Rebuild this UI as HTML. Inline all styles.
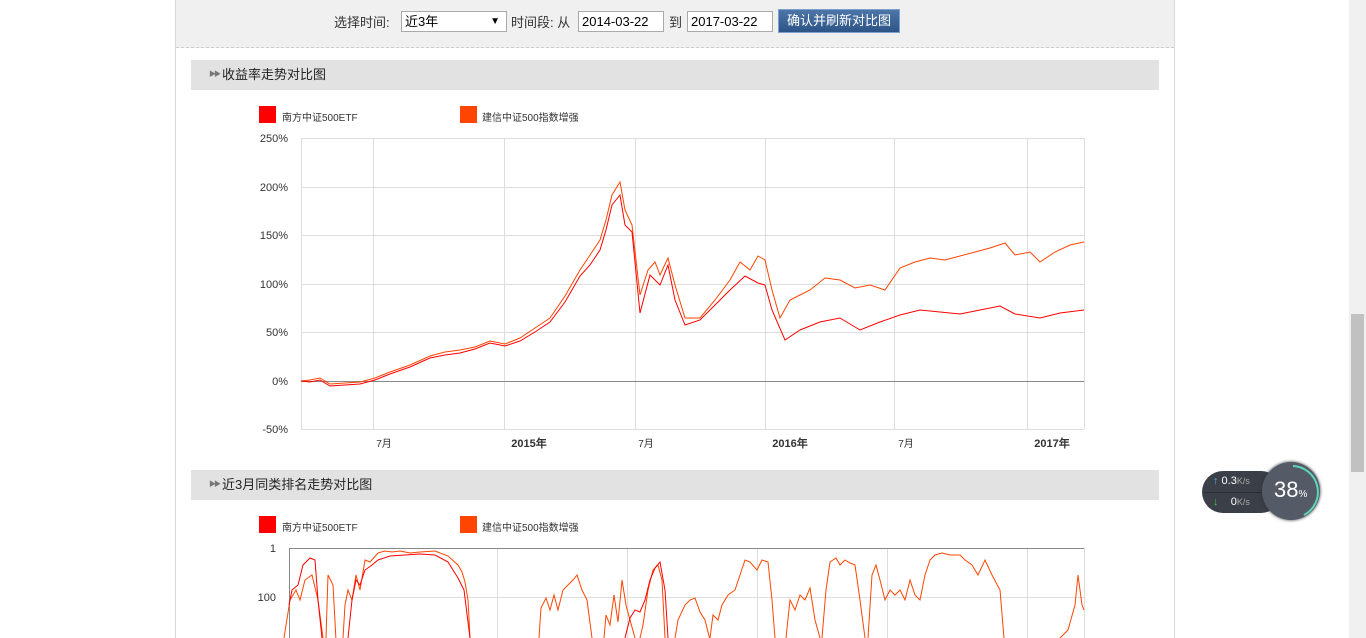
<!DOCTYPE html>
<html><head><meta charset="utf-8"><style>
body{margin:0;width:1366px;height:638px;overflow:hidden;background:#fff;font-family:"Liberation Sans","Noto Sans CJK SC",sans-serif;position:relative}
.wrap{position:absolute;left:175px;top:0;width:998px;height:638px;border-left:1px solid #d8d8d8;border-right:1px solid #d8d8d8}
.top{position:absolute;left:0;top:0;width:998px;height:47px;background:#f0f0f0;border-bottom:1px dashed #ccc}
.t{position:absolute;font-size:13px;color:#333}
.inp{position:absolute;top:11px;border:1px solid #aaa;background:#fff;font-size:13px;line-height:19px;padding-left:3px;box-sizing:border-box;height:21px}
.btn{position:absolute;left:602px;top:9px;width:122px;height:24px;background:linear-gradient(#4d76a8,#2d5486);border:1px solid #7aa0d0;box-sizing:border-box;color:#fff;font-size:13px;line-height:22px;text-align:center}
.bar{position:absolute;left:15px;width:968px;height:30px;background:#e2e2e2;font-size:13px;color:#222;line-height:30px}
.bar span{position:absolute;left:18px;top:0;font-size:7px;color:#777;letter-spacing:-2px}
.bar b{font-weight:normal;position:absolute;left:31px}
.lg{position:absolute;width:17px;height:17px}
.lt{position:absolute;font-size:10px;color:#333}
.sb{position:absolute;left:1349px;top:0;width:17px;height:638px;background:#f0f0f0}
</style></head><body>
<div class="wrap">
<div class="top">
<div class="t" style="left:158px;top:12px">选择时间:</div>
<div class="inp" style="left:225px;width:106px">近3年<span style="position:absolute;right:6px;font-size:10px">▼</span></div>
<div class="t" style="left:335px;top:12px">时间段: 从</div>
<div class="inp" style="left:402px;width:86px">2014-03-22</div>
<div class="t" style="left:493px;top:12px">到</div>
<div class="inp" style="left:511px;width:86px">2017-03-22</div>
<div class="btn">确认并刷新对比图</div>
</div>
<div class="bar" style="top:60px"><span>▶▶</span><b>收益率走势对比图</b></div>
<div class="bar" style="top:470px"><span>▶▶</span><b>近3月同类排名走势对比图</b></div>
</div>
<div class="lg" style="left:259px;top:106px;background:#f00"></div><div class="lt" style="left:282px;top:109px">南方中证500ETF</div>
<div class="lg" style="left:460px;top:106px;background:#ff4500"></div><div class="lt" style="left:482px;top:109px">建信中证500指数增强</div>
<div class="lg" style="left:259px;top:516px;background:#f00"></div><div class="lt" style="left:282px;top:519px">南方中证500ETF</div>
<div class="lg" style="left:460px;top:516px;background:#ff4500"></div><div class="lt" style="left:482px;top:519px">建信中证500指数增强</div>
<svg width="1366" height="638" style="position:absolute;left:0;top:0" font-family="Liberation Sans" font-size="11">
<g stroke="#ddd" stroke-width="1" fill="none">
<path d="M301 138.5H1084M301 187.5H1084M301 235.5H1084M301 284.5H1084M301 332.5H1084M301 429.5H1084"/>
<path d="M373.5 138V429M504.5 138V429M635.5 138V429M765.5 138V429M894.5 138V429M1027.5 138V429M1084.5 138V429M301.5 138V429"/>
<path d="M289 597.5H1084M497.5 548V638M627.5 548V638M757.5 548V638M887.5 548V638M1027.5 548V638M1084.5 548V638"/>
</g>
<path d="M301 381.5H1084" stroke="#888"/>
<path d="M289 548.5H1084M289.5 548V638" stroke="#888"/>
<g fill="#333" text-anchor="end"><text x="288" y="142">250%</text><text x="288" y="191">200%</text><text x="288" y="239">150%</text><text x="288" y="288">100%</text><text x="288" y="336">50%</text><text x="288" y="385">0%</text><text x="288" y="433">-50%</text>
<text x="276" y="552">1</text><text x="276" y="601">100</text></g>
<g fill="#333" text-anchor="middle" font-size="10"><text x="384" y="447">7月</text><text x="646" y="447">7月</text><text x="906" y="447">7月</text>
<g font-weight="bold" font-size="11"><text x="529" y="447">2015年</text><text x="790" y="447">2016年</text><text x="1052" y="447">2017年</text></g></g>
<polyline fill="none" stroke="#ff4500" points="301,381 310,380 320,378 330,384 345,383 360,382 375,378 390,372 410,365 430,356 445,352 460,350 475,347 490,341 505,344 520,338 535,328 550,318 565,296 580,270 590,255 600,240 606,220 612,195 620,182 625,210 632,225 640,295 648,270 655,262 660,275 668,258 675,285 685,318 700,318 715,300 730,280 740,262 750,270 758,256 765,260 772,290 780,318 790,300 800,295 810,290 825,278 840,280 855,288 870,285 885,290 900,268 915,262 930,258 945,260 960,256 975,252 990,248 1005,243 1015,255 1030,252 1040,262 1055,252 1070,245 1084,242"/>
<polyline fill="none" stroke="#f00" points="301,381 310,382 320,380 330,386 345,385 360,384 375,380 390,374 410,367 430,358 445,355 460,353 475,349 490,343 505,346 520,341 535,332 550,322 565,302 580,276 590,265 600,250 606,230 612,205 620,195 625,225 632,232 640,313 650,275 660,285 668,265 675,300 685,325 700,320 715,305 730,290 745,276 758,283 765,285 772,310 785,340 800,330 820,322 840,318 860,330 880,322 900,315 920,310 940,312 960,314 980,310 1000,306 1015,314 1040,318 1060,313 1084,310"/>
<polyline fill="none" stroke="#ff4500" points="284,638 290,600 296,590 300,600 305,580 312,575 318,600 323,638"/>
<polyline fill="none" stroke="#f00" points="289,605 292,590 298,585 303,565 310,558 315,560 318,600 322,638"/>
<polyline fill="none" stroke="#ff4500" points="326,638 328,575 333,585 336,640"/>
<polyline fill="none" stroke="#ff4500" points="343,638 345,605 348,590 352,600 356,575 360,590 365,560 370,562 378,553 385,551 392,552 400,551 410,553 420,552 435,551 448,556 458,565 462,572 465,582 468,600 470,638"/>
<polyline fill="none" stroke="#f00" points="348,638 352,600 356,580 360,585 365,570 372,565 378,560 390,556 405,555 420,554 435,555 448,562 458,578 464,590 470,638"/>
<polyline fill="none" stroke="#ff4500" points="539,638 541,608 546,598 550,610 554,595 558,610 563,590 568,585 573,580 577,575 582,590 587,600 592,638"/>
<polyline fill="none" stroke="#ff4500" points="604,638 606,615 610,625 614,595 618,622 622,580 626,605 630,620 635,638"/>
<polyline fill="none" stroke="#ff4500" points="640,638 643,625 648,590 653,570 658,565 662,580 665,638"/>
<polyline fill="none" stroke="#f00" points="625,638 630,618 635,610 640,612 645,600 650,580 655,568 660,562 665,590 668,638"/>
<polyline fill="none" stroke="#ff4500" points="675,638 678,620 685,605 690,600 695,598 700,612 705,620 710,640"/>
<polyline fill="none" stroke="#ff4500" points="710,638 713,615 718,620 722,605 728,595 735,590 740,575 745,560 750,562 757,570 762,560 768,562 772,600 775,638"/>
<polyline fill="none" stroke="#ff4500" points="786,638 790,600 795,610 800,595 805,600 810,588 815,620 820,638"/>
<polyline fill="none" stroke="#ff4500" points="822,638 826,590 830,562 836,558 840,565 845,560 850,563 855,565 860,600 865,638"/>
<polyline fill="none" stroke="#ff4500" points="868,638 872,575 876,565 880,580 885,600 890,590 895,595 900,590 905,600 910,580 915,595 920,600 925,575 930,560 935,555 942,553 950,555 960,555 965,560 972,565 978,575 985,560 992,575 1000,590 1004,638"/>
<polyline fill="none" stroke="#ff4500" points="1060,638 1068,630 1075,605 1078,575 1082,605 1084,610"/>
</svg>
<div class="sb"><div style="position:absolute;left:2px;top:314px;width:13px;height:158px;background:#c1c1c1"></div></div>
<div style="position:absolute;left:1202px;top:471px;width:80px;height:42px;border-radius:21px;background:#3a3f48"></div>
<div style="position:absolute;left:1204px;top:492px;width:64px;height:1px;background:#2a2e35"></div>
<div style="position:absolute;left:1213px;top:475px;font-size:11px;color:#fff"><span style="color:#4ab0f0">↑</span> 0.3<span style="font-size:9px;color:#aaa">K/s</span></div>
<div style="position:absolute;left:1213px;top:496px;font-size:11px;color:#fff"><span style="color:#3c3">↓</span> &nbsp;&nbsp;&nbsp;0<span style="font-size:9px;color:#aaa">K/s</span></div>
<div style="position:absolute;left:1262px;top:462px;width:58px;height:58px;border-radius:50%;background:#555b66;box-shadow:0 0 3px #333"></div>
<svg style="position:absolute;left:1262px;top:462px" width="60" height="60"><path d="M31 4 A26 26 0 0 1 42 53" fill="none" stroke="#5cd6b8" stroke-width="2"/></svg>
<div style="position:absolute;left:1274px;top:477px;font-size:22px;color:#fff">38<span style="font-size:10px">%</span></div>
</body></html>
